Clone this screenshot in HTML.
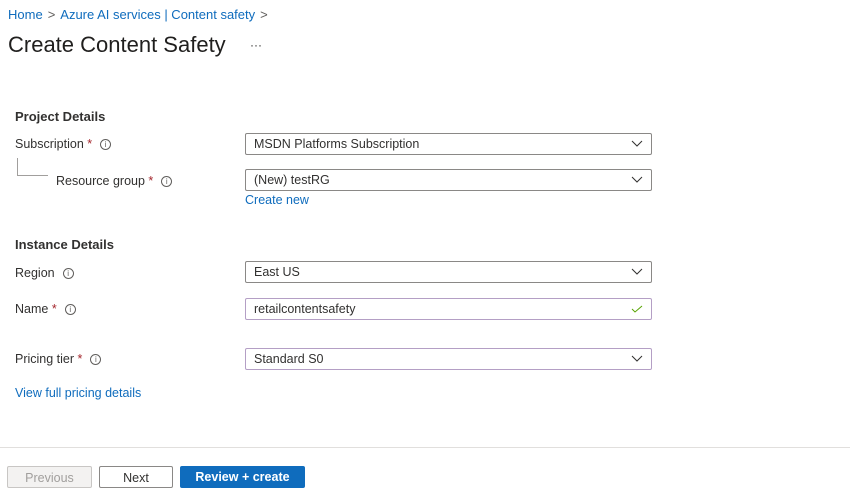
<!DOCTYPE html>
<html><head><style>
body{margin:0;width:850px;height:494px;background:#fff;font-family:"Liberation Sans",sans-serif;position:relative;overflow:hidden;color:#323130}
.a{position:absolute}
.bc{left:8px;top:7px;font-size:13px;color:#0f6cbd;white-space:nowrap}
.bc span{color:#605e5c;margin:0 5px}
h1{position:absolute;left:8px;top:32px;margin:0;font-size:22px;font-weight:normal;color:#201f1e}
.sec{font-size:13px;font-weight:bold;color:#323130;left:15px}
.lbl{font-size:12.5px;color:#323130}
.st{color:#a4262c}
.i{display:inline-block;width:9px;height:9px;border:1px solid #605e5c;border-radius:50%;font-size:8px;line-height:9px;text-align:center;margin-left:8px;vertical-align:1px;color:#605e5c}
.box{left:245px;height:20px;border:1px solid #8a8886;font-size:12.5px;line-height:20px;padding-left:8px;box-sizing:content-box;width:397px;border-radius:2px}
.box.p{border-color:#b49fc5}
.box svg{position:absolute;right:8px;top:6px}
.btn{top:466px;height:22px;font-size:12.5px;text-align:center;line-height:22px;box-sizing:border-box;border-radius:2px}
</style></head><body>
<div class="a bc">Home<span>&gt;</span>Azure AI services | Content safety<span>&gt;</span></div>
<h1>Create Content Safety</h1>
<div class="a" style="left:250px;top:38px;font-size:12px;color:#323130">···</div>

<div class="a sec" style="top:109px">Project Details</div>
<div class="a lbl" style="left:15px;top:137px">Subscription <span class="st">*</span><span class="i">i</span></div>
<div class="a" style="left:17px;top:158px;width:30px;height:17px;border-left:1px solid #a19f9d;border-bottom:1px solid #a19f9d"></div>
<div class="a lbl" style="left:56px;top:174px">Resource group <span class="st">*</span><span class="i">i</span></div>
<div class="a box" style="top:133px">MSDN Platforms Subscription<svg width="12" height="8"><path d="M1 1l5 5 5-5" stroke="#323130" fill="none"/></svg></div>
<div class="a box" style="top:169px">(New) testRG<svg width="12" height="8"><path d="M1 1l5 5 5-5" stroke="#323130" fill="none"/></svg></div>
<div class="a" style="left:245px;top:193px;font-size:12.5px;color:#0f6cbd">Create new</div>

<div class="a sec" style="top:237px">Instance Details</div>
<div class="a lbl" style="left:15px;top:266px">Region<span class="i">i</span></div>
<div class="a box" style="top:261px">East US<svg width="12" height="8"><path d="M1 1l5 5 5-5" stroke="#323130" fill="none"/></svg></div>
<div class="a lbl" style="left:15px;top:302px">Name <span class="st">*</span><span class="i">i</span></div>
<div class="a box p" style="top:298px">retailcontentsafety<svg width="12" height="8"><path d="M1 4l3 3 7-6" stroke="#57a300" fill="none"/></svg></div>
<div class="a lbl" style="left:15px;top:352px">Pricing tier <span class="st">*</span><span class="i">i</span></div>
<div class="a box p" style="top:348px">Standard S0<svg width="12" height="8"><path d="M1 1l5 5 5-5" stroke="#323130" fill="none"/></svg></div>
<div class="a" style="left:15px;top:386px;font-size:12.5px;color:#0f6cbd">View full pricing details</div>

<div class="a" style="left:0;top:447px;width:850px;height:1px;background:#e1dfdd"></div>
<div class="a btn" style="left:7px;width:85px;background:#f3f2f1;border:1px solid #c8c6c4;color:#a19f9d">Previous</div>
<div class="a btn" style="left:99px;width:74px;border:1px solid #8a8886;color:#323130">Next</div>
<div class="a btn" style="left:180px;width:125px;background:#0f6cbd;color:#fff;font-weight:bold">Review + create</div>
</body></html>
